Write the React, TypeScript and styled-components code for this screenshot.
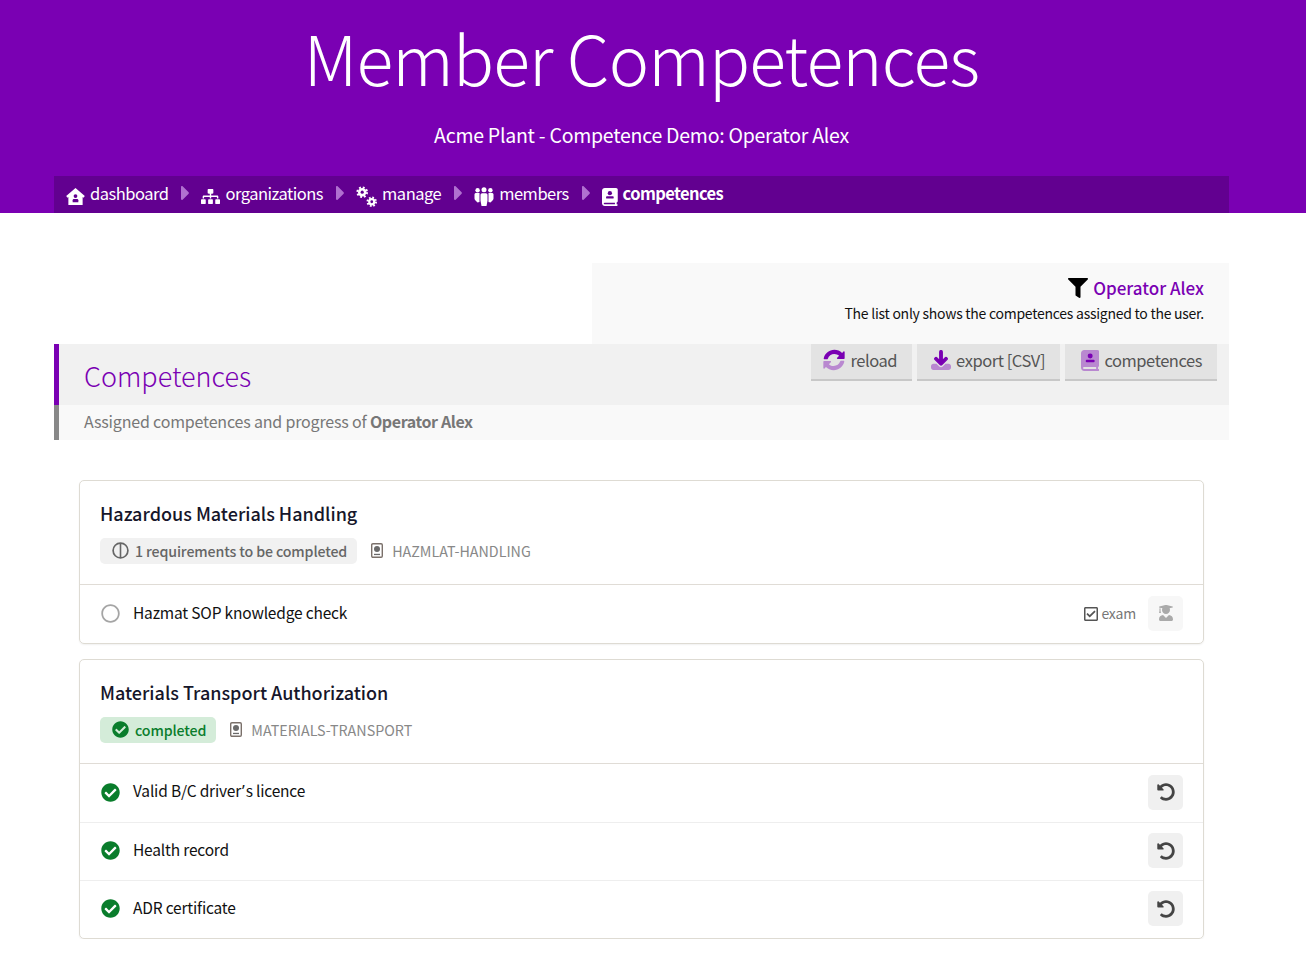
import React from 'react';
import styled, { createGlobalStyle } from 'styled-components';
import {
  FaSitemap,
  FaCaretRight,
  FaFilter,
  FaCheckCircle,
  FaRegCircle,
  FaRegCheckSquare,
  FaUserGraduate,
  FaUndoAlt,
} from 'react-icons/fa';

const FONT = `"Noto Sans CJK SC", "Noto Sans", sans-serif`;
const BAR = '#620090';
const PURPLE = '#7a00b3';

const GlobalStyle = createGlobalStyle`
  html, body {
    margin: 0;
    padding: 0;
    background: #fff;
    font-family: ${FONT};
    color: #111;
  }
  * { box-sizing: border-box; }
`;

const HomeIcon: React.FC = () => (
  <svg width="19" height="19" viewBox="0 0 20 20">
    <path d="M10 1 19.800 9.600 18.400 11.200 17.500 10.400V19H2.500V10.400L1.600 11.200.200 9.600Z" fill="currentColor" />
    <circle cx="10" cy="9.500" r="2" fill={BAR} />
    <path d="M7 16V14C7 13 7.800 12.500 8.500 12.500H11.500C12.200 12.500 13 13 13 14V16Z" fill={BAR} />
  </svg>
);

const Gear: React.FC<{ cx: number; cy: number; r: number }> = ({ cx, cy, r }) => {
  const teeth = (2 * Math.PI * (r + 0.6)) / 16;
  return (
    <g>
      <circle cx={cx} cy={cy} r={r} fill="currentColor" />
      <circle
        cx={cx}
        cy={cy}
        r={r + 0.6}
        fill="none"
        stroke="currentColor"
        strokeWidth={2.2}
        strokeDasharray={`${teeth} ${teeth}`}
      />
      <circle cx={cx} cy={cy} r={r * 0.38} fill={BAR} />
    </g>
  );
};

const GearsIcon: React.FC = () => (
  <svg width="21" height="21" viewBox="0 0 22 22">
    <Gear cx={6.500} cy={6.500} r={4.400} />
    <Gear cx={16.500} cy={16.500} r={3.800} />
  </svg>
);

const MembersIcon: React.FC = () => (
  <svg width="20" height="19" viewBox="0 0 20 19">
    <circle cx="3.600" cy="3.200" r="2.200" fill="currentColor" />
    <circle cx="10" cy="2.800" r="2.500" fill="currentColor" />
    <circle cx="16.400" cy="3.200" r="2.200" fill="currentColor" />
    <path d="M.5 7.500C.5 6.500 1.300 6 2 6H5.500V15L3.500 15.500 1.500 13.500C.8 12.800.5 12.200.5 11.500Z" fill="currentColor" />
    <path d="M19.500 7.500C19.500 6.500 18.700 6 18 6H14.500V15L16.500 15.500 18.500 13.500C19.200 12.800 19.500 12.200 19.500 11.500Z" fill="currentColor" />
    <path d="M6.500 8C6.500 7 7.300 6.300 8 6.300H12C12.700 6.300 13.500 7 13.500 8V13.500L12.500 19H7.500L6.500 13.500Z" fill="currentColor" />
  </svg>
);

const PassportIcon: React.FC = () => (
  <svg width="12" height="15" viewBox="0 0 12 15">
    <rect x="0.700" y="0.700" width="10.600" height="13.600" rx="1.200" fill="none" stroke="#7a706a" strokeWidth="1.400" />
    <circle cx="6" cy="6" r="3" fill="#6a6a6a" />
    <rect x="3" y="10.800" width="6" height="1.300" fill="#6a6a6a" />
  </svg>
);

// book with a person on it, not in the icon packs
const BookUser: React.FC<{ height: number; duo?: boolean }> = ({ height, duo }) => (
  <svg width={height * 0.875} height={height} viewBox="0 0 14 16">
    <path
      d="M2.500 0H12.500C13.300 0 14 .7 14 1.500V11.500C14 12.100 13.600 12.600 13 12.800V14.500H13.200C13.600 14.500 14 14.800 14 15.200S13.600 16 13.200 16H2.500C1.100 16 0 14.900 0 13.500V2.500C0 1.100 1.100 0 2.500 0Z"
      fill="currentColor"
      opacity={duo ? 0.4 : 1}
    />
    <circle cx="7" cy="4.600" r="1.900" fill={duo ? PURPLE : BAR} />
    <rect x="3.600" y="7.400" width="6.800" height="2" rx="0.800" fill={duo ? PURPLE : BAR} />
    <path d="M2.500 13H11.500V14.500H2.500C2.100 14.500 1.500 14.200 1.500 13.750S2.100 13 2.500 13Z" fill={duo ? '#e3e3e3' : BAR} />
  </svg>
);

const DuoReload: React.FC = () => (
  <svg width="22" height="22" viewBox="0 0 512 512">
    <path
      fill={PURPLE}
      opacity="0.4"
      d="M8 296c0-8.800 7.200-16 16-16h148c14 0 21 17 11 27l-46 46c30 28 69 44 111 44 70 0 131-46 152-110 3-8 10-14 19-14h57c13 0 22 12 19 24-25 113-126 197-247 197-70 0-133-28-180-74l-33 33c-10 10-27 3-27-11z"
    />
    <path
      fill={PURPLE}
      d="M504 216c0 8.800-7.200 16-16 16H340c-14 0-21-17-11-27l46-46c-30-28-69-44-111-44-70 0-131 46-152 110-3 8-10 14-19 14H36c-13 0-22-12-19-24C42 102 143 18 264 18c70 0 133 28 180 74l33-33c10-10 27-3 27 11z"
    />
  </svg>
);

const DuoDownload: React.FC = () => (
  <svg width="20" height="20" viewBox="0 0 512 512">
    <path
      fill={PURPLE}
      opacity="0.4"
      d="M0 416c0-35 29-64 64-64h78l70 70c24 24 64 24 88 0l70-70h78c35 0 64 29 64 64v32c0 35-29 64-64 64H64c-35 0-64-29-64-64z"
    />
    <path
      fill={PURPLE}
      stroke={PURPLE}
      strokeWidth="34"
      strokeLinejoin="round"
      d="M256 16c18 0 32 14 32 32v226l73-73c12-12 33-12 45 0s12 33 0 45L279 373c-12 12-33 12-45 0L106 246c-12-12-12-33 0-45s33-12 45 0l73 73V48c0-18 14-32 32-32z"
    />
  </svg>
);

const HalfCircle: React.FC = () => (
  <svg width="17" height="17" viewBox="0 0 17 17">
    <circle cx="8.500" cy="8.500" r="7.400" fill="none" stroke="#666" strokeWidth="1.700" />
    <rect x="7.700" y="1" width="1.600" height="15" fill="#666" />
  </svg>
);

const Header = styled.header`
  background: ${PURPLE};
  height: 213px;
  display: flex;
  flex-direction: column;
  align-items: center;
  color: #fff;
  padding: 0 77px 0 54px;
`;

const Title = styled.h1`
  margin: 12px 0 0;
  font-size: 68px;
  line-height: 90px;
  font-weight: 300;
  letter-spacing: -0.8px;
`;

const Subtitle = styled.div`
  margin-top: 18px;
  font-size: 19.500px;
  line-height: 30px;
  letter-spacing: -0.25px;
`;

const Crumbs = styled.nav`
  margin-top: auto;
  width: 100%;
  height: 37px;
  background: ${BAR};
  display: flex;
  align-items: center;
  padding: 0 0 4px 12px;
  font-size: 16.500px;
  letter-spacing: -0.5px;
`;

const Crumb = styled.span<{ $current?: boolean }>`
  display: inline-flex;
  align-items: center;
  gap: 5px;
  font-weight: ${(p) => (p.$current ? 700 : 400)};
  letter-spacing: ${(p) => (p.$current ? '-0.6px' : 'inherit')};
  svg { flex: none; position: relative; top: 4px; }
`;

const Sep = styled(FaCaretRight)`
  flex: none;
  color: #b070d0;
  width: 9px;
  height: 24px;
  margin: 0 11px 0 13px;
`;

const Main = styled.main`
  padding: 50px 77px 0 54px;
`;

const FilterRow = styled.div`
  display: flex;
  justify-content: flex-end;
`;

const FilterBox = styled.div`
  width: 637px;
  height: 81px;
  background: #f9f9f9;
  padding: 11px 25px 0 0;
  text-align: right;
`;

const FilterName = styled.div`
  display: flex;
  justify-content: flex-end;
  align-items: center;
  gap: 5px;
  font-size: 17px;
  line-height: 28px;
  font-weight: 500;
  color: ${PURPLE};
  svg { color: #000; font-size: 20px; }
`;

const FilterNote = styled.div`
  font-size: 14px;
  line-height: 22px;
  letter-spacing: -0.26px;
  color: #111;
`;

const SectionTop = styled.div`
  height: 61px;
  background: #f1f1f1;
  border-left: 5px solid ${PURPLE};
  display: flex;
  justify-content: space-between;
  align-items: flex-start;
  padding: 0 12px 0 25px;
`;

const SectionTitle = styled.h2`
  margin: 12px 0 0;
  font-size: 27px;
  line-height: 40px;
  font-weight: 300;
  color: ${PURPLE};
`;

const Actions = styled.div`
  display: flex;
  gap: 5px;
`;

const ActionButton = styled.button<{ $left: number }>`
  height: 37px;
  border: none;
  border-bottom: 2px solid #c8c8c8;
  background: #e3e3e3;
  color: #555;
  font-family: ${FONT};
  font-size: 16.500px;
  letter-spacing: -0.45px;
  padding: 0 15px 3px ${(p) => p.$left}px;
  display: flex;
  align-items: center;
  gap: 5px;
  cursor: pointer;
`;

const ActionIcon = styled.span`
  display: inline-flex;
  color: ${PURPLE};
`;

const SectionSub = styled.div`
  height: 35px;
  background: #f9f9f9;
  border-left: 5px solid #888;
  padding-left: 25px;
  font-size: 16px;
  letter-spacing: -0.18px;
  line-height: 33px;
  color: #777;
  b { font-weight: 700; letter-spacing: -0.4px; }
`;

const List = styled.div`
  padding: 40px 25px 0 25px;
  display: flex;
  flex-direction: column;
  gap: 15px;
`;

const Card = styled.section`
  border: 1px solid #dedbd3;
  border-radius: 5px;
  box-shadow: 0 1px 2px rgba(0, 0, 0, 0.06);
`;

const CardHead = styled.div`
  padding: 17px 20px 20px;
  border-bottom: 1px solid #e0dcd6;
`;

const CardTitle = styled.h3`
  margin: 0;
  font-size: 18px;
  line-height: 30px;
  font-weight: 500;
  color: #16162a;
`;

const Meta = styled.div`
  display: flex;
  align-items: center;
  margin-top: 10px;
`;

const Pill = styled.span<{ $done?: boolean }>`
  display: inline-flex;
  align-items: center;
  height: 26px;
  padding: 0 10px 1px 12px;
  gap: 6px;
  border-radius: 5px;
  font-size: 14.200px;
  letter-spacing: -0.13px;
  font-weight: 500;
  background: ${(p) => (p.$done ? '#d4ecd9' : '#f1f1f1')};
  color: ${(p) => (p.$done ? '#0a7d2c' : '#666')};
  svg { color: ${(p) => (p.$done ? '#0a7d2c' : '#666')}; font-size: 17px; }
`;

const Code = styled.span`
  display: inline-flex;
  align-items: center;
  gap: 9px;
  margin-left: 14px;
  padding-bottom: 2px;
  font-size: 14.300px;
  color: #888;
`;

const Row = styled.div`
  display: flex;
  align-items: center;
  min-height: 58px;
  padding: 0 20px 2px 21px;
  font-size: 15.500px;
  letter-spacing: -0.18px;
  color: #111;
  & + & { border-top: 1px solid #eeeeee; }
`;

const RowIcon = styled.span<{ $done?: boolean }>`
  display: inline-flex;
  width: 19px;
  margin-right: 13px;
  font-size: 19px;
  color: ${(p) => (p.$done ? '#0a7d2c' : '#a5a5a5')};
`;

const RowName = styled.span`
  flex: 1;
  padding-bottom: 3px;
`;

// Noto CJK draws ’ full width, so this one glyph takes the latin face
const Apostrophe = styled.span`
  font-family: "Noto Sans", sans-serif;
  margin: 0 1px;
`;

const Exam = styled.span`
  display: inline-flex;
  align-items: center;
  gap: 2px;
  margin-right: 12px;
  font-size: 14px;
  color: #777;
  svg { color: #555; font-size: 16px; position: relative; top: 1px; }
`;

const IconButton = styled.button<{ $disabled?: boolean }>`
  width: 35px;
  height: 35px;
  border: none;
  border-radius: 5px;
  background: ${(p) => (p.$disabled ? '#f7f7f7' : '#f0f0f0')};
  color: ${(p) => (p.$disabled ? '#aaa' : '#444')};
  display: flex;
  align-items: center;
  justify-content: center;
  font-size: ${(p) => (p.$disabled ? '16px' : '18px')};
  padding: 0;
`;

const crumbs = [
  { label: 'dashboard', icon: <HomeIcon /> },
  { label: 'organizations', icon: <FaSitemap size={19} /> },
  { label: 'manage', icon: <GearsIcon /> },
  { label: 'members', icon: <MembersIcon /> },
];

const Requirement: React.FC<{ children: React.ReactNode }> = ({ children }) => (
  <Row>
    <RowIcon $done>
      <FaCheckCircle />
    </RowIcon>
    <RowName>{children}</RowName>
    <IconButton>
      <FaUndoAlt />
    </IconButton>
  </Row>
);

const App: React.FC = () => (
  <>
    <GlobalStyle />
    <Header>
      <Title>Member Competences</Title>
      <Subtitle>Acme Plant - Competence Demo: Operator Alex</Subtitle>
      <Crumbs>
        {crumbs.map((c) => (
          <React.Fragment key={c.label}>
            <Crumb>
              {c.icon}
              {c.label}
            </Crumb>
            <Sep />
          </React.Fragment>
        ))}
        <Crumb $current>
          <BookUser height={18} />
          competences
        </Crumb>
      </Crumbs>
    </Header>
    <Main>
      <FilterRow>
        <FilterBox>
          <FilterName>
            <FaFilter />
            Operator Alex
          </FilterName>
          <FilterNote>The list only shows the competences assigned to the user.</FilterNote>
        </FilterBox>
      </FilterRow>
      <SectionTop>
        <SectionTitle>Competences</SectionTitle>
        <Actions>
          <ActionButton $left={12}>
            <ActionIcon>
              <DuoReload />
            </ActionIcon>
            reload
          </ActionButton>
          <ActionButton $left={14}>
            <ActionIcon>
              <DuoDownload />
            </ActionIcon>
            export [CSV]
          </ActionButton>
          <ActionButton $left={16}>
            <ActionIcon>
              <BookUser height={21} duo />
            </ActionIcon>
            competences
          </ActionButton>
        </Actions>
      </SectionTop>
      <SectionSub>
        Assigned competences and progress of <b>Operator Alex</b>
      </SectionSub>
      <List>
        <Card>
          <CardHead>
            <CardTitle>Hazardous Materials Handling</CardTitle>
            <Meta>
              <Pill>
                <HalfCircle />1 requirements to be completed
              </Pill>
              <Code>
                <PassportIcon />
                HAZMLAT-HANDLING
              </Code>
            </Meta>
          </CardHead>
          <Row>
            <RowIcon>
              <FaRegCircle />
            </RowIcon>
            <RowName>Hazmat SOP knowledge check</RowName>
            <Exam>
              <FaRegCheckSquare />
              exam
            </Exam>
            <IconButton $disabled>
              <FaUserGraduate />
            </IconButton>
          </Row>
        </Card>
        <Card>
          <CardHead>
            <CardTitle>Materials Transport Authorization</CardTitle>
            <Meta>
              <Pill $done>
                <FaCheckCircle />
                completed
              </Pill>
              <Code>
                <PassportIcon />
                MATERIALS-TRANSPORT
              </Code>
            </Meta>
          </CardHead>
          <Requirement>
            Valid B/C driver<Apostrophe>’</Apostrophe>s licence
          </Requirement>
          <Requirement>Health record</Requirement>
          <Requirement>ADR certificate</Requirement>
        </Card>
      </List>
    </Main>
  </>
);

export default App;
